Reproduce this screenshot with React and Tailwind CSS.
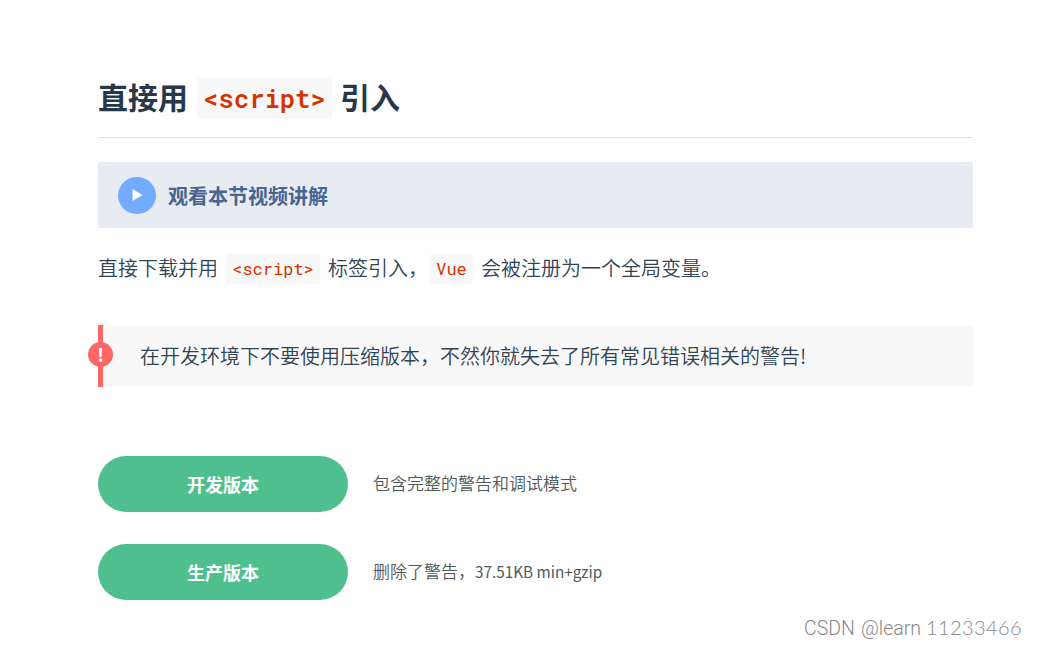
const InlineCode = ({ className, children }) => (
    <code className={`rounded-[3px] bg-[#f8f8f8] text-[#d63200] ${className}`}>{children}</code>
);

const downloads = [
    { label: '开发版本', note: '包含完整的警告和调试模式' },
    { label: '生产版本', note: '删除了警告，', size: '37.51KB min+gzip' },
];

const App = () => {
    return (
        <div className="relative h-[645px] w-[1037px] overflow-hidden bg-white pl-[98px] pr-16 pt-[77px] font-['Noto_Sans_CJK_SC',sans-serif] text-[#304455]">
            {/* Section title */}
            <h2 className="flex h-[61px] items-start border-b border-[#dddddd] text-[30px] font-bold leading-[38px] text-[#273849]">
                直接用
                <InlineCode className="ml-[9px] mr-2 h-[42px] w-[135px] text-center font-['Roboto_Mono','DejaVu_Sans_Mono',monospace] text-[25.5px] font-semibold leading-[43px]">
                    &lt;script&gt;
                </InlineCode>
                引入
            </h2>

            {/* Video lesson */}
            <div className="mt-6 flex h-[66px] items-center rounded-xs bg-[#e7ecf3] pl-5">
                <span className="flex h-[37px] w-[38px] items-center justify-center rounded-full bg-[#73abff]">
                    <svg className="size-3" viewBox="0 0 12 12" fill="#fff">
                        <path d="M1.5 0 11.5 6 1.5 12z" />
                    </svg>
                </span>
                <span className="ml-3 pt-0.5 text-xl font-bold text-[#486491]">观看本节视频讲解</span>
            </div>

            <p className="mt-6 flex h-8 items-center text-xl font-[350] leading-8">
                直接下载并用
                <InlineCode className="mx-2 h-[31px] w-[94px] text-center font-['Roboto_Mono','DejaVu_Sans_Mono',monospace] text-[17px] font-normal leading-8">
                    &lt;script&gt;
                </InlineCode>
                标签引入，
                <InlineCode className="ml-[2px] mr-2 h-[31px] w-[43px] text-center font-['Roboto_Mono','DejaVu_Sans_Mono',monospace] text-[17px] font-normal leading-8">
                    Vue
                </InlineCode>
                会被注册为一个全局变量。
            </p>

            {/* Warning */}
            <div className="relative mt-[41px] flex h-[62px] items-center rounded-r-sm border-l-5 border-[#ff6666] bg-[#f8f8f8] pl-[37px] text-xl font-[350]">
                <span className="absolute -left-[15px] top-[17px] flex size-[25px] items-center justify-center rounded-full bg-[#ff6666] pb-px text-lg font-bold text-white">
                    !
                </span>
                <span className="pb-px">在开发环境下不要使用压缩版本，不然你就失去了所有常见错误相关的警告!</span>
            </div>

            {/* Downloads */}
            <div className="mt-[69px] flex flex-col gap-8">
                {downloads.map((item) => (
                    <div key={item.label} className="flex items-center">
                        <button className="h-14 w-[250px] rounded-full bg-[#4fc08d] pb-px text-lg font-bold text-white">
                            {item.label}
                        </button>
                        <span className="ml-[25px] pb-0.5 text-[17px] font-[350] text-[#4f5959]">
                            {item.note}
                            {item.size && <span className="text-[15.3px] font-normal">{item.size}</span>}
                        </span>
                    </div>
                ))}
            </div>

            <div className="absolute bottom-[2px] left-[804px] flex items-baseline whitespace-nowrap font-['Roboto',sans-serif] text-[19.5px] font-light text-[#888888]">
                <span className="w-[57px]">CSDN</span>
                <span className="w-[65px]">@learn</span>
                <span className="font-['Lato',sans-serif] text-[20px] tracking-[0.4px]">11233466</span>
            </div>
        </div>
    );
};

export default App;
